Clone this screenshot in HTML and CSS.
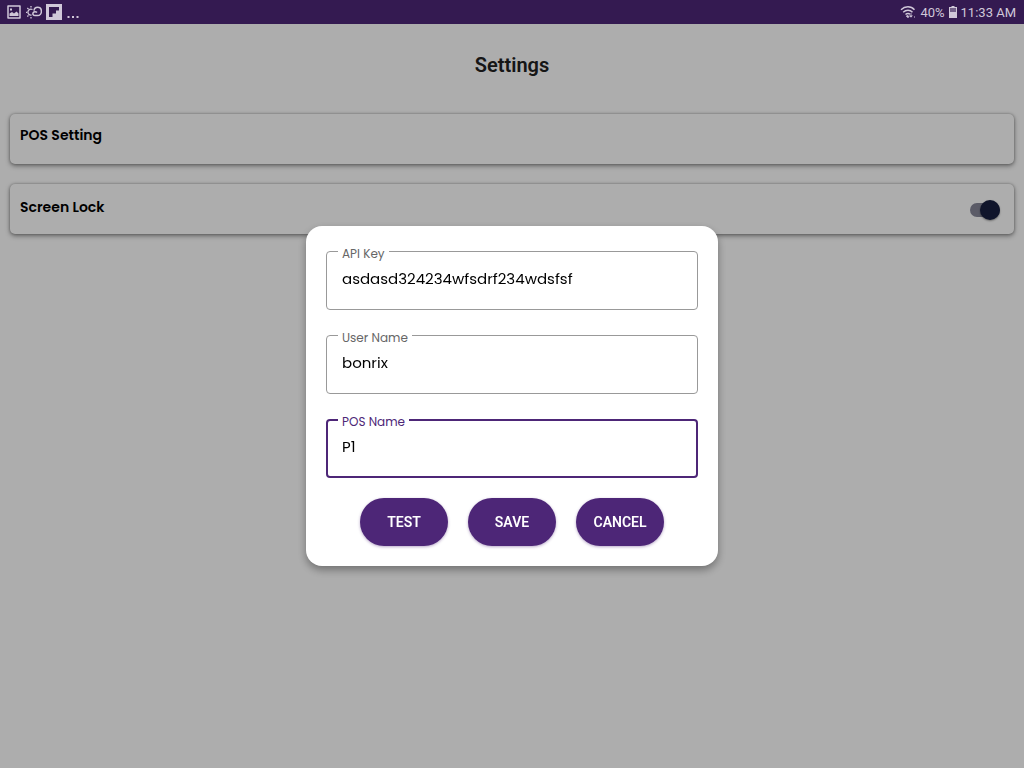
FILE: index.html
```html
<!DOCTYPE html>
<html lang="en">
<head>
    <meta charset="UTF-8">
    <meta name="viewport" content="width=device-width, initial-scale=1.0">
    <title>Settings</title>
    <link rel="stylesheet" href="styles.css">
</head>
<body>

<header class="status-bar">
    <div class="status-group">
        <svg class="icon" width="16" height="16" viewBox="0 0 16 16">
            <path d="M2 2 H14 V14 H2 Z" fill="none" stroke="currentColor" stroke-width="1.5" stroke-linejoin="round"/>
            <path d="M3.500 12 V9.500 L6 8 L8 9.500 L10.500 7.500 L12.500 9.500 V12 Z" fill="currentColor"/>
            <rect x="4" y="4.500" width="2" height="2" fill="currentColor"/>
        </svg>
        <svg class="icon" width="16" height="16" viewBox="0 0 16 16">
            <path d="M6.500 5.500 A3 3 0 1 0 5.500 11" fill="none" stroke="currentColor" stroke-width="1.300"/>
            <path d="M11 8.600 C10 7.400 8 7.400 7.200 8.600 C6.400 10 7.200 11.600 9 11.600 H11.500 C14 11.600 15.400 9.500 15.400 7.400 C15.400 4.900 13.800 3.200 11.600 3.200 C9.600 3.200 8.200 4.600 8 6.600" fill="none" stroke="currentColor" stroke-width="1.500"/>
            <path d="M5 2 V3.400 M1.300 4 L2.500 5 M0 8.300 H1.200 M1.300 12.600 L2.500 11.600 M5 13 V14.400" stroke="currentColor" stroke-width="1.300"/>
        </svg>
        <svg class="icon" width="16" height="16" viewBox="0 0 16 16">
            <path d="M0 0 H16 V16 H0 Z M3 3 V13 H6.500 V9.500 H10 V6.500 H13 V3 Z" fill="currentColor" fill-rule="evenodd"/>
        </svg>
        <svg class="icon" width="14" height="16" viewBox="0 0 14 16">
            <path d="M1.500 12 H3.500 V14 H1.500 Z M6 12 H8 V14 H6 Z M10.500 12 H12.500 V14 H10.500 Z" fill="currentColor"/>
        </svg>
    </div>
    <div class="status-group">
        <svg class="icon" width="16" height="16" viewBox="0 0 16 16">
            <path d="M1 5.800 C5 1.800 11 1.800 14.500 5.800 M3.200 8.300 C6 5.500 10 5.500 12.500 8.300 M5.500 10.600 C7 9.100 9 9.100 10 10.400" fill="none" stroke="currentColor" stroke-width="1.400"/>
            <path d="M6.300 12 L8 13.800 L9 12.500 L8 11.500 Z M11 9 V13 M9.600 11.600 L11 13.200 L12.400 11.600" fill="currentColor" stroke="currentColor" stroke-width="0.800"/>
            <path d="M14.500 12 V14" stroke="currentColor" stroke-width="1" opacity="0.500"/>
        </svg>
        <span>40%</span>
        <svg class="icon" width="8" height="12" viewBox="0 0 8 12">
            <path d="M2.500 0 H5.500 V1 H8 V12 H0 V1 H2.500 Z" fill="currentColor"/>
            <path d="M1 2 H7 V6 H1 Z" fill="#341a51" opacity="0.600"/>
        </svg>
        <span>11:33 AM</span>
    </div>
</header>

<main class="settings">
    <h1 class="title">Settings</h1>
    <section class="card">
        <h2 class="card-label">POS Setting</h2>
    </section>
    <section class="card card-switch">
        <label class="card-label" for="screenLock">Screen Lock</label>
        <input class="switch" type="checkbox" id="screenLock" checked>
    </section>
</main>

<div class="overlay">
    <form class="dialog" role="dialog" aria-label="POS Setting">
        <div class="field">
            <label for="apiKey">API Key</label>
            <input type="text" id="apiKey" value="asdasd324234wfsdrf234wdsfsf">
        </div>
        <div class="field">
            <label for="userName">User Name</label>
            <input type="text" id="userName" value="bonrix">
        </div>
        <div class="field active">
            <label for="posName">POS Name</label>
            <input type="text" id="posName" value="P1">
        </div>
        <div class="buttons">
            <button type="button">TEST</button>
            <button type="button">SAVE</button>
            <button type="button">CANCEL</button>
        </div>
    </form>
</div>

</body>
</html>
```

FILE: styles.css
```css
* {
    box-sizing: border-box;
}
body {
    margin: 0;
    min-height: 100vh;
    font-family: Roboto, sans-serif;
    background-color: #fff;
}

/* Status bar */
.status-bar {
    position: relative;
    z-index: 2;
    display: flex;
    justify-content: space-between;
    align-items: center;
    height: 24px;
    padding: 0 8px 0 6px;
    background-color: #341a51;
    color: #d0c8d9;
    font-size: 13px;
}
.status-group {
    display: flex;
    align-items: center;
    gap: 4px;
}
.icon {
    display: block;
}

/* Settings list */
.settings {
    padding: 0 10px;
}
.title {
    margin: 0;
    padding: 26px 0 34px;
    font-size: 20px;
    line-height: 30px;
    font-weight: 600;
    text-align: center;
    color: #212121;
}
.card {
    min-height: 50px;
    margin-bottom: 20px;
    padding: 9px 10px;
    border-radius: 5px;
    background-color: #fff;
    box-shadow: 0 2px 5px rgba(0, 0, 0, 0.4), 0 0 3px rgba(0, 0, 0, 0.3);
}
.card-switch {
    display: flex;
    justify-content: space-between;
    align-items: center;
    padding: 2px 14px 0 10px;
}
.card-label {
    margin: 0;
    font-family: Poppins, Inter, sans-serif;
    font-size: 14px;
    line-height: 24px;
    font-weight: 600;
    color: #000;
}
.card-switch .card-label {
    padding-bottom: 6px;
}
.switch {
    appearance: none;
    display: flex;
    justify-content: flex-end;
    align-items: center;
    width: 30px;
    height: 14px;
    margin: 0;
    border-radius: 7px;
    background-color: #868799;
}
.switch::before {
    content: "";
    width: 20px;
    height: 20px;
    flex: none;
    border-radius: 50%;
    background-color: #182040;
    box-shadow: 0 1px 2px rgba(0, 0, 0, 0.4);
}
.switch:not(:checked) {
    justify-content: flex-start;
}

/* Dialog */
.overlay {
    position: fixed;
    inset: 0;
    display: flex;
    justify-content: center;
    align-items: center;
    padding-top: 24px;
    background-color: rgba(0, 0, 0, 0.32);
}
.dialog {
    display: flex;
    flex-direction: column;
    gap: 25px;
    width: 100%;
    max-width: 412px;
    padding: 25px 20px 20px;
    border-radius: 16px;
    background-color: #fff;
    box-shadow: 0 4px 8px rgba(0, 0, 0, 0.35);
}
.field {
    position: relative;
    font-family: Poppins, Inter, sans-serif;
}
.field label {
    position: absolute;
    top: -6px;
    left: 12px;
    padding: 0 4px;
    font-size: 12px;
    line-height: 18px;
    background-color: #fff;
    color: #666;
}
.field input {
    display: block;
    width: 100%;
    height: 59px;
    padding: 0 15px 4px;
    border: 1px solid #999;
    border-radius: 4px;
    outline: none;
    font-family: inherit;
    font-size: 15px;
    color: #000;
    background-color: #fff;
}
.field.active label {
    color: #4d2677;
}
.field.active input {
    padding: 0 14px 4px;
    border: 2px solid #4d2677;
}
.buttons {
    display: flex;
    justify-content: center;
    gap: 20px;
    margin-top: -5px;
}
.buttons button {
    min-width: 88px;
    height: 48px;
    padding: 0 16px;
    border: none;
    border-radius: 24px;
    background-color: #4d2677;
    color: #fff;
    font-family: inherit;
    font-size: 14px;
    font-weight: 600;
    box-shadow: 0 1px 3px rgba(77, 38, 119, 0.4);
    cursor: pointer;
}
```
